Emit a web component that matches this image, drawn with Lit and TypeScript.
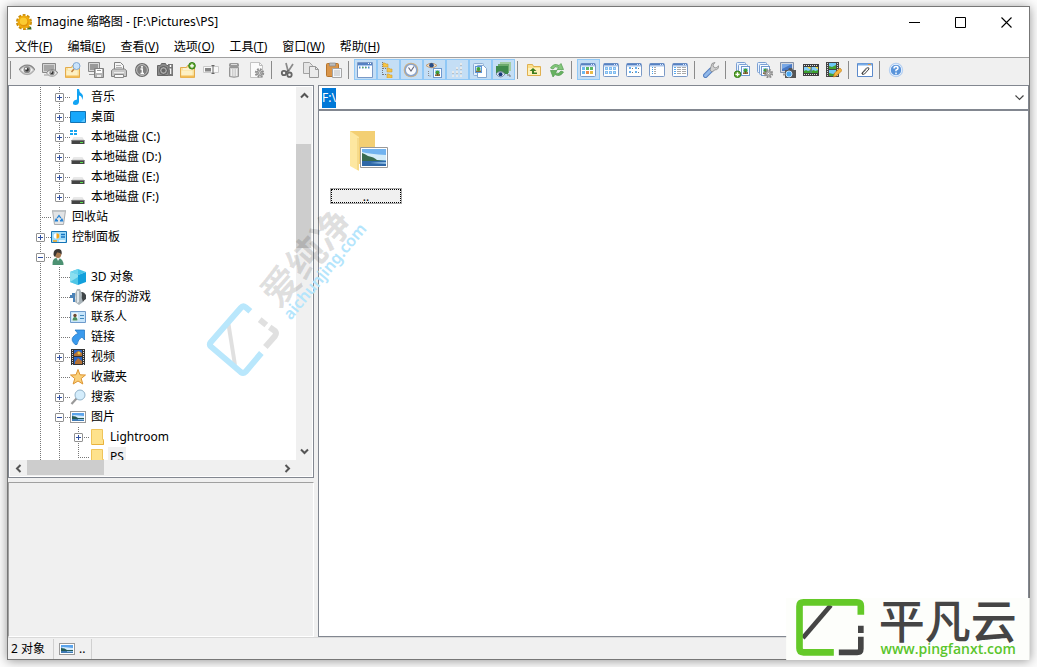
import { LitElement, html, svg, css, nothing } from "lit";
import { customElement, property, query } from "lit/decorators.js";
import { classMap } from "lit/directives/class-map.js";

/* ---------- icon artwork, all on a 16 x 16 grid ---------- */

const eye = svg`
  <path d="M0 8Q3 3.200 8 3T16 8Q13 13 8 13T0 8Z" fill="#c4c4c4"/>
  <path d="M0 8Q3 3.400 8 3.200T16 8" fill="none" stroke="#858585" stroke-width="1.200"/>
  <path d="M1 8.500Q4 12.500 8 12.700T15 8.500" fill="none" stroke="#a8a8a8"/>
  <path d="M2 8Q4 5 8 5T14 8Q11 11.500 8 11.500T2 8Z" fill="#f4f4f4"/>
  <circle cx="8" cy="7.800" r="3.500" fill="#8a8a8a"/><circle cx="8" cy="7.800" r="1.800" fill="#333"/>
  <circle cx="7" cy="6.700" r="1" fill="#fff"/>`;

const folder = svg`
  <path d="M.5 5.500h6l1-2h7v12H.5z" fill="#f9e09a" stroke="#e3ab4c"/>
  <path d="M1.500 8.500h11v6h-11z" fill="#fdf0c4"/><path d="M3 7h9" stroke="#fff"/>
  <path d="M1 14.500h13" stroke="#f3bd55" stroke-width="2"/>`;

const plusBadge = (x: number, y: number) => svg`
  <circle cx=${x} cy=${y} r="3.300" fill="#62a82f" stroke="#2f7d17"/>
  <path d=${`M${x - 2} ${y}h4M${x} ${y - 2}v4`} stroke="#fff" stroke-width="1.300"/>`;

const gear = (x: number, y: number) => svg`
  <circle cx=${x} cy=${y} r="3.700" fill="none" stroke="#8f8f8f" stroke-width="2" stroke-dasharray="1.800 1.100"/>
  <circle cx=${x} cy=${y} r="2.600" fill="#d2d2d2" stroke="#8a8a8a"/>
  <circle cx=${x} cy=${y} r="1.100" fill="#fff" stroke="#777" stroke-width=".7"/>`;

const pane = svg`
  <rect x=".5" y="1.500" width="15" height="13" rx="1" fill="#fff" stroke="#7a99c6"/>
  <path d="M1 2.500h14" stroke="#5681c2" stroke-width="2"/><path d="M1 4h14" stroke="#a9c6ec"/>
  <path d="M11 2.500h1M13 2.500h1" stroke="#dce9ff"/>`;

const dots = (color: string, xs: number[], ys: number[], w = 2, h = 2) =>
  xs.map((x) => ys.map((y) => svg`<rect x=${x} y=${y} width=${w} height=${h} fill=${color}/>`));

const photo = (x: number, y: number) => svg`
  <g transform=${`translate(${x} ${y})`}>
    <rect x=".5" y=".5" width="8" height="9" fill="#fff" stroke="#6f98ce"/>
    <path d="M2 2h5v6H2z" fill="#a9d3ff"/><path d="M2 8V6.500l5-.5v2z" fill="#8a6a3a"/>
    <circle cx="4.500" cy="4.500" r="2" fill="#3f9f35"/><path d="M4.500 5v3" stroke="#75521e"/></g>`;

const stack = svg`
  <rect x="2.500" y=".5" width="9" height="10" rx="1" fill="#eaf3ff" stroke="#7ba0d3"/>
  <rect x="4.500" y="2.500" width="9" height="10" rx="1" fill="#f6faff" stroke="#7ba0d3"/>`;

const film = svg`
  <path d="M0 2h16v12H0z" fill="#3d3d3d"/>
  <path d="M1 3.500h14M1 12.500h14" stroke="#e3e3e3" stroke-dasharray="1 1"/>
  <path d="M1 5h6.500v6H1zM8.500 5h6.500v6H8.500z" fill="#83cdf9"/>
  <path d="M1 11V9l2-1 2 1 2.500-1v3zM8.500 11V9l2-1 2 1 2.500-1v3z" fill="#3ea12f"/>
  <path d="M4 5h3.500v2.500zM12 5h3v2.500z" fill="#f3dc3c"/>`;

const drive = svg`
  <path d="M4 8h8l3 4H1z" fill="#d9d9d9"/><path d="M4 8h8l1 2H3z" fill="#e9e9e9"/>
  <path d="M1.500 11.500h13v3.500h-13z" fill="#444"/><path d="M1.500 11.500h13" stroke="#777"/>
  <path d="M10 13h3v1h-3z" fill="#59e04c"/>`;

const landscape = svg`
  <rect x=".5" y="2.500" width="15" height="11" fill="#fff" stroke="#999"/>
  <path d="M2 4h12v8H2z" fill="#5ba4ec"/><path d="M4 6l10 1v2.500H2V7z" fill="#d6ecfb"/>
  <path d="M2 7q4 0 6 2h6v1H2z" fill="#245a55"/><path d="M2 10h12v2H2z" fill="#3f7ab4"/>
  <path d="M8 10.500h6" stroke="#8cbce6"/>`;

const icons: Record<string, unknown> = {
  app: svg`
    <circle cx="8" cy="8" r="6.500" fill="none" stroke="#c98d0c" stroke-width="3" stroke-dasharray="2.700 1.384"/>
    <circle cx="8" cy="8" r="6.500" fill="#f0ac0c"/><circle cx="8" cy="8" r="4.500" fill="#e1930a"/>
    <circle cx="7.500" cy="7.200" r="3.800" fill="#fbcb31"/><path d="M10 15.500l5-3 .5 3z" fill="#3c6c20"/>`,
  eye,
  screenEye: svg`
    <path d="M.5 1.500h13v9H.5z" fill="#d3d3d3" stroke="#888"/><path d="M2 3h10v6H2z" fill="#a6a6a6"/>
    <path d="M2 13h6M4 11h3" stroke="#999"/><g transform="translate(4 5) scale(.75)">${eye}</g>`,
  folderFind: svg`${folder}
    <path d="M9 7L6.500 10" stroke="#c08040" stroke-width="1.500"/>
    <circle cx="11.500" cy="4" r="3.500" fill="#c9e3fb" stroke="#7fa7d3"/>`,
  screenSave: svg`
    <path d="M.5.500h11v9H.5z" fill="#d9d9d9" stroke="#8a8a8a"/><path d="M2 2h8v6H2z" fill="#999"/>
    <path d="M1 12.500h5" stroke="#999"/><path d="M6.500 6.500h9v9h-9z" fill="#b5b5b5" stroke="#808080"/>
    <path d="M8 7h6v4H8z" fill="#fff"/><path d="M9 8.500h4" stroke="#999"/><path d="M9 13h4v2H9z" fill="#eee"/>`,
  print: svg`
    <path d="M3.500.500h6l3 3v5h-9z" fill="#f5f5f5" stroke="#808080"/><path d="M5 3.500h5M5 5.500h6" stroke="#b0b0b0"/>
    <path d="M.5 8.500l2-1.500h11l2 1.500v6H.500z" fill="#c8c8c8" stroke="#808080"/>
    <path d="M3 10.500h10" stroke="#eee"/><path d="M3.500 12.500h9v3h-9z" fill="#f8f8f8" stroke="#888"/>`,
  info: svg`
    <circle cx="8" cy="8" r="7" fill="#6a6a6a"/><circle cx="8" cy="8" r="5.400" fill="#808080" stroke="#c4c4c4"/>
    <path d="M8 4v1.700" stroke="#fff" stroke-width="1.700"/><path d="M6.500 7H8.300v4.500M6.500 11.500h3.500" stroke="#fff" stroke-width="1.300" fill="none"/>`,
  camera: svg`
    <path d="M.5 3.500h3l1-2h4l1 2h3v10H.5z" fill="#8a8a8a" stroke="#666"/><circle cx="6.500" cy="8.500" r="4" fill="#a9a9a9" stroke="#555"/>
    <circle cx="6.500" cy="8.500" r="2" fill="#666"/><path d="M11 2h5v12h-5z" fill="#777"/>
    <path d="M13.500 3v2" stroke="#fff" stroke-width="1.500"/><path d="M12.500 7h1.200v5" stroke="#fff" stroke-width="1.200" fill="none"/>`,
  folderNew: svg`${folder}${plusBadge(12, 3.800)}`,
  rename: svg`
    <path d="M.5 4.500h15v6H.500z" fill="#f8f8f8" stroke="#cacaca"/><path d="M2 6h6v3.500H2z" fill="#858585"/>
    <path d="M8.500 3.500h3M8.500 11.500h3M10 3.500v8" stroke="#666"/>`,
  bin: svg`
    <path d="M3.500 5.500h9v9q-4.500 1.500-9 0z" fill="#cfcfcf" stroke="#959595"/>
    <path d="M5.500 7v7M8 7v7M10.500 7v7" stroke="#eee"/><rect x="3" y="1" width="10" height="4" rx="1.500" fill="#999"/>
    <path d="M5 2.500h6" stroke="#ddd"/>`,
  pageGear: svg`
    <path d="M1.500.500h9l3 3v12h-12z" fill="#fbfbfb" stroke="#c3c3c3"/><path d="M10.500.500v3h3" fill="none" stroke="#bbb"/>${gear(10.500, 11)}`,
  cut: svg`
    <path d="M8 9L6 1M8.500 9L13 2" stroke="#8a8a8a" stroke-width="1.700"/>
    <circle cx="4" cy="11" r="2.200" fill="none" stroke="#666" stroke-width="1.800"/>
    <circle cx="9.500" cy="12.700" r="2.200" fill="none" stroke="#666" stroke-width="1.800"/><path d="M6 10l3-1.500" stroke="#666" stroke-width="1.500"/>`,
  copy: svg`
    <path d="M.5.500h6l3 3v8h-9z" fill="#e5e5e5" stroke="#a2a2a2"/>
    <path d="M6.500 4.500h6l3 3v8h-9z" fill="#ececec" stroke="#989898"/><path d="M12.500 4.500v3h3" fill="none" stroke="#999"/>`,
  paste: svg`
    <rect x=".5" y="1.500" width="12" height="13" rx="1" fill="#d9954a" stroke="#b6742c"/>
    <path d="M3.500 1h6v3h-6z" fill="#bbb" stroke="#888" stroke-width=".7"/>
    <path d="M6.500 6.500h9v9h-9z" fill="#f4f7fb" stroke="#a5a5a5"/><path d="M8 9h6M8 11h6M8 13h6" stroke="#bdbdbd"/>`,
  windowBar: svg`
    <path d="M.5.500h15v15H.5z" fill="#fff" stroke="#7a99c6"/><path d="M1 2h14" stroke="#5681c2" stroke-width="2"/>
    <path d="M1 3.500h14" stroke="#a9c6ec"/><path d="M11 1.500h1M13 1.500h1" stroke="#fff"/>
    <path d="M2 5.500h12" stroke="#4f8fd0" stroke-width="2" stroke-dasharray="1.500 1.500"/><path d="M5 5.500h6" stroke="#61ad5b" stroke-width="1" stroke-dasharray="1.500 1.500"/>`,
  treeView: svg`
    <path d="M2.500 0v14M3 6.500h4M3 12.500h4" stroke="#777" stroke-dasharray="1 1" fill="none"/>
    ${[0, 5, 11].map((y) => svg`<path d=${`M${y ? 7 : 3} ${y + 1}h2l1 1h2v3h-5z`} fill="#f6c544" stroke="#d09a30" stroke-width=".6"/>`)}`,
  clock: svg`
    <circle cx="8" cy="8" r="7.300" fill="#d9b377"/><circle cx="8" cy="8" r="5.800" fill="#f9fbff" stroke="#8ba5cc" stroke-width="1.500"/>
    <path d="M5.500 5.500L8 9l3-4.500" fill="none" stroke="#667" stroke-width="1.100"/>`,
  eyePhoto: svg`
    <path d="M0 3.500Q5.500-1 11 3.500Q5.500 8 0 3.500Z" fill="#f3e2cb" stroke="#c29b71"/><circle cx="5.500" cy="3.300" r="2.300" fill="#284d88"/>
    <path d="M2.500 9v5h3" stroke="#888" stroke-dasharray="1 1" fill="none"/>${photo(7, 6)}`,
  grid: svg`${dots("#e6e9eb", [11], [1])}${dots("#e6e9eb", [7, 11], [5])}${dots("#e6e9eb", [3, 7, 11], [9, 13])}
    <path d="M3 11.500h2M7 11.500h2M11 11.500h2M7 7.500h2M11 7.500h2M11 3.500h2" stroke="#b9c2c8"/>`,
  photos: svg`
    <rect x="1.500" y="1.500" width="10" height="12" rx="1" fill="#e4f0fc" stroke="#8daed4"/>
    <path d="M5.500 3.500h6l3 3v9h-9z" fill="#fff" stroke="#86a7cf"/><path d="M3 4h7v7H3z" fill="#5b95d8"/>
    <path d="M4 5h5v5H4z" fill="#d9ecff"/><path d="M4 8.500h5v1.500H4z" fill="#8a6a3a"/><circle cx="6.500" cy="7" r="2" fill="#43a33a"/>`,
  greenEye: svg`
    <path d="M5 0h11v9H5z" fill="#a3cda4"/><path d="M3 2h11v9H3z" fill="#6cab6d"/><path d="M1 4h12v8H1z" fill="#3e8a4b"/>
    <path d="M1 12q4-5 9 0-4 6-9 0z" fill="#e9f2fb" stroke="#7b8ba5"/><circle cx="5.500" cy="12.200" r="2" fill="#183a7c"/>
    <path d="M12 13h3v2" stroke="#777" fill="none"/>`,
  folderUp: svg`
    <path d="M1.500 2.500h5l1 2h7v9h-13z" fill="#fbe08c" stroke="#e0b050"/><path d="M2 6h12v7H2z" fill="#fff1bb"/>
    <path d="M7 6l3.500 3H8v1.500h3V12H6V9H3.500z" fill="#3d7d20"/>`,
  refresh: svg`
    <path d="M1.500 6Q5 .5 10 3.500L12 1.500l2.500 6H8l1.700-2Q6 3.500 4 7z" fill="#82c77a" stroke="#4f9a4c" stroke-width=".7"/>
    <path d="M14.500 10Q11 15.500 6 12.500L4 15 1.500 8.500H8L6.300 11Q10 12.500 12 9z" fill="#66b260" stroke="#4f9a4c" stroke-width=".7"/>`,
  thumbs: svg`${pane}${dots("#6cb9f0", [2], [5, 9], 3, 3)}${dots("#5bb765", [6], [5], 3, 3)}${dots("#5bb765", [10], [5], 3, 3)}${dots("#e98a4d", [6], [9], 3, 3)}${dots("#e9bd49", [10], [9], 3, 3)}`,
  tiles: svg`${pane}${dots("#82bdf0", [2, 6, 10], [5, 9], 3, 3)}<path d="M3 6.500h1M7 6.500h1M11 6.500h1M3 10.500h1M7 10.500h1M11 10.500h1" stroke="#b9dcfa"/>`,
  small: svg`${pane}${dots("#66b0ee", [3, 9], [5, 9])}<path d="M6 6.500h1M12 6.500h1M6 10.500h1M12 10.500h1" stroke="#777"/>`,
  list: svg`${pane}<path d="M3 5.500h1M3 7.500h1M3 9.500h1M3 11.500h1" stroke="#3f9de9"/><path d="M5 5.500h2M5 7.500h2M5 9.500h2M5 11.500h2" stroke="#aaa"/>`,
  details: svg`${pane}<path d="M2 5.500h2M2 7.500h2M2 9.500h2M2 11.500h2" stroke="#58aaf0"/><path d="M5 5.500h9M5 7.500h9M5 9.500h9M5 11.500h9" stroke="#aaa" stroke-dasharray="4 1"/>`,
  wrench: svg`
    <path d="M2.500 13.500L8 8" stroke="#557fc0" stroke-width="5" stroke-linecap="round"/>
    <path d="M2.500 13.500L7.500 8.500" stroke="#92b9ea" stroke-width="3" stroke-linecap="round"/>
    <path d="M7 8l2 2 3-2.200q3.500.2 3.800-4L13 6l-2.500-1L10 3l2-2.500Q8 .5 8 4.500z" fill="#d0d0d0" stroke="#8a8a8a" stroke-width=".8"/>`,
  stackAdd: svg`${stack}${photo(7, 4)}${plusBadge(3.500, 12.300)}`,
  stackGear: svg`<g transform="translate(-2 0)">${stack}${photo(6, 4)}</g>${gear(11.500, 11.500)}`,
  screenCam: svg`
    <path d="M.5.500h13v10H.5z" fill="#d5d9e1" stroke="#8492a9"/><path d="M2 2h10v7H2z" fill="#4778c4"/><path d="M2 2h10L2 7z" fill="#79a8e6"/>
    <path d="M3 12.500h5" stroke="#999" stroke-width="2"/><path d="M5 8h3l1-2h3l1 2h3v8H5z" fill="#555"/><circle cx="9" cy="12" r="3" fill="#4ba8f1" stroke="#bfe2ff"/>`,
  film,
  filmEdit: svg`
    <path d="M0 0h13v15H0z" fill="#444"/><path d="M1.500 1v14M11.500 1v14" stroke="#ddd" stroke-dasharray="1 1"/>
    <path d="M3 1h7v6H3zM3 8h7v6H3z" fill="#6cc8f7"/><path d="M3 7V4l3 1 4-2v4zM3 14v-3l4 1 3-1v3z" fill="#43a133"/>
    <path d="M7.500 15l1-4 5.500-5 2 2.500-5.500 5.500z" fill="#f3b63e" stroke="#be7a1a" stroke-width=".7"/>`,
  clip: svg`
    <path d="M.5 1.500h15v13H.500z" fill="#fff" stroke="#5c8acb"/><path d="M1 2.500h14" stroke="#7baee8" stroke-width="2"/><path d="M11 2.500h3" stroke="#e89a3c"/>
    <path d="M4.500 11.500l5-5.500q3-1 2.500 1l-4.500 5q-3 1.500-2-1L9 7.500" fill="none" stroke="#444"/>`,
  help: svg`
    <circle cx="8" cy="8" r="7.200" fill="#b4cff1"/><circle cx="8" cy="8" r="5.700" fill="#5a94da" stroke="#e8f2ff"/>
    <path d="M6 6.500q0-2 2-2t2 1.700q0 1-2 2v1M8 10.500v1.700" fill="none" stroke="#fff" stroke-width="1.500"/>`,

  music: svg`<path d="M7 0h2q0 3 3 5 2 2 0 6 .5-4-3-4.500V13q-.5 3-3.500 3T3 13.500 7 10.500z" fill="#12a4f4"/>`,
  desktop: svg`<path d="M.5 2.500h15v11H.5z" fill="#18a8fb" stroke="#1474b4"/><path d="M15 9v4h-4z" fill="#58c6ff"/>`,
  driveWin: svg`${drive}<path d="M0 1h3v2H0zM4 1h3v2H4zM0 4h3v2H0zM4 4h3v2H4z" fill="#18a6f0"/>`,
  drive,
  recycle: svg`
    <path d="M1.500 1.500h13l-2 14h-9z" fill="#e2e4e6" stroke="#aaadb0"/><path d="M2 1h12v2H2z" fill="#bfc3c6"/>
    <path d="M8 5.500l-2.500 3.500h1.500l1-1.500 1 1.500h1.500z" fill="#2482d4"/><path d="M4.500 9.500l-1 3h3.500v-1.500H6l.5-1.500zM11.500 9.500l1 3H9v-1.500h1l-.5-1.500z" fill="#2482d4"/>`,
  control: svg`
    <path d="M.5 2.500h15v11H.5z" fill="#9edbf8" stroke="#1473b5"/><circle cx="5.500" cy="7" r="2.800" fill="#fff"/>
    <path d="M5.500 7V4.200A2.800 2.800 0 0 1 5.500 9.800z" fill="#f1a51b"/><path d="M10 5.500h4M10 8h4" stroke="#1674c1" stroke-width="1.500"/>
    <path d="M2 12h4" stroke="#f1a51b" stroke-width="1.500"/><path d="M8 12h6" stroke="#fff" stroke-width="1.500"/>`,
  user: svg`
    <path d="M1.500 16q-.5-6 3.500-7h3q4.500 1.500 4.500 7z" fill="#4c9172"/><ellipse cx="7" cy="5" rx="3.300" ry="4" fill="#a9794f"/>
    <path d="M2.500 5q0-5 5-5 4 0 3 5.500Q9 3 6 3.500L4 8Q2.500 7 2.500 5z" fill="#3b3733"/><path d="M5.500 9l1.500 3L9 9z" fill="#eee"/>`,
  cube: svg`<path d="M8 0l8 3-8 3-8-3z" fill="#45c4e8"/><path d="M0 3l8 3v10l-8-3z" fill="#8adff0"/><path d="M16 3L8 6v10l8-3z" fill="#12a0dc"/><path d="M0 13L8 8v8z" fill="#4fc6e6"/><path d="M8 0v6L0 3z" fill="#6fd5ee"/>`,
  game: svg`
    <path d="M0 6h2V4h3v9H3V9H0z" fill="#4b83b8"/><path d="M10 4q3-3 6 2v4q-2 1-3 3h-3z" fill="#404548"/>
    <path d="M5 13q1-5 0-8l2-5h3l2 5q-1 4 1 8l-4 3z" fill="#a9b4ba"/><path d="M7 2h2v11l-2 1z" fill="#e1e8eb"/>`,
  contact: svg`
    <path d="M.5 2.500h15v11H.5z" fill="#c7e5fb" stroke="#6f9bcb"/><path d="M2 4h6v8H2z" fill="#edf6fb"/>
    <circle cx="5" cy="6.500" r="1.700" fill="#6e4a34"/><path d="M2.500 11.500q0-3.500 2.500-3.500t2.500 3.500z" fill="#4b8f60"/><path d="M10 6.500h4M10 9.500h4" stroke="#438abd"/>`,
  link: svg`<path d="M5 1h9.500v10L12 8q-4 2-5 7.500H5Q.5 11 3 8t5-3.500z" fill="#3a9aed" stroke="#1a70bd" stroke-width=".7"/>`,
  video: svg`
    <path d="M1 0h14v16H1z" fill="#333"/><path d="M2.500 1v15M13.500 1v15" stroke="#ddd" stroke-dasharray="1 1"/>
    <path d="M4 1h8v6H4zM4 8h8v7H4z" fill="#2864c4"/><path d="M4 5l4-3 4 2v3H4zM5 13l3-4 4 3v3H5z" fill="#b67334"/><circle cx="9" cy="4" r="1.500" fill="#ecc544"/>`,
  star: svg`<path d="M8 .5l2 5.300 5.500.2-4.300 3.500L12.800 15 8 12l-4.800 3 1.600-5.500L.5 6l5.500-.2z" fill="#fad07a" stroke="#dd9430"/>`,
  search: svg`<path d="M1.500 15l5-5.500" stroke="#999" stroke-width="2.200"/><circle cx="10" cy="6" r="5" fill="#d4edfc" stroke="#93b3c9"/>`,
  landscape,
  folderPlain: svg`<path d="M2.500.500h11v10h1V15.500h-12z" fill="#fee28c" stroke="#efc45b"/><path d="M3 15.500h11.500v-4" fill="none" stroke="#e9b23c"/>`,
};

const icon = (name: string) =>
  html`<svg class="icon" viewBox="0 0 16 16" width="16" height="16" aria-hidden="true">${icons[name]}</svg>`;

/* ---------- toolbar ---------- */

interface Tool { icon: string; label: string; pressed?: boolean }
const t = (name: string, label: string, pressed = false): Tool => ({ icon: name, label, pressed });

const toolGroups: Tool[][] = [
  [t("eye", "查看"), t("screenEye", "全屏查看"), t("folderFind", "浏览"), t("screenSave", "另存为"), t("print", "打印"),
   t("info", "信息"), t("camera", "相机信息"), t("folderNew", "新建文件夹"), t("rename", "重命名"), t("bin", "删除"), t("pageGear", "属性")],
  [t("cut", "剪切"), t("copy", "复制"), t("paste", "粘贴")],
  [t("windowBar", "地址栏", true), t("treeView", "文件夹树", true), t("clock", "历史", true), t("eyePhoto", "预览", true),
   t("grid", "网格", true), t("photos", "图像", true), t("greenEye", "自动预览", true)],
  [t("folderUp", "向上"), t("refresh", "刷新")],
  [t("thumbs", "缩略图", true), t("tiles", "平铺"), t("small", "小图标"), t("list", "列表"), t("details", "详细信息")],
  [t("wrench", "选项")],
  [t("stackAdd", "添加"), t("stackGear", "批量转换"), t("screenCam", "截屏"), t("film", "动画"), t("filmEdit", "编辑动画")],
  [t("clip", "附件")],
  [t("help", "帮助")],
];

@customElement("tool-bar")
class ToolBar extends LitElement {
  static styles = css`
    :host { display: flex; padding: 1px 0 5px; background: #f0f0f0; border-top: 1px solid #a0a0a0; }
    .group { display: flex; }
    .group::before { content: ""; width: 1px; height: 18px; margin: 2px 5px 0 2px; background: #8b8b8b; }
    button { width: 23px; height: 21px; padding: 2px; border: 1px solid transparent; background: none; display: flex; }
    button.pressed { background: #c4def5; border-color: #90c8f6; }
    .icon { display: block; flex: none; }
  `;
  render() {
    return toolGroups.map((g) => html`<div class="group" role="group">${g.map((b) => html`
      <button class=${classMap({ pressed: !!b.pressed })} title=${b.label} aria-label=${b.label}
        aria-pressed=${b.pressed ? "true" : "false"}>${icon(b.icon)}</button>`)}</div>`);
  }
}

/* ---------- folder tree ---------- */

/* guides: one letter a column. v: line, t: tee, l: corner */
interface Row { guides: string; icon: string; label: string; toggle?: "+" | "-"; selected?: boolean }

const rows: Row[] = [
  { guides: "vt", icon: "music", label: "音乐", toggle: "+" },
  { guides: "vt", icon: "desktop", label: "桌面", toggle: "+" },
  { guides: "vt", icon: "driveWin", label: "本地磁盘 (C:)", toggle: "+" },
  { guides: "vt", icon: "drive", label: "本地磁盘 (D:)", toggle: "+" },
  { guides: "vt", icon: "drive", label: "本地磁盘 (E:)", toggle: "+" },
  { guides: "vl", icon: "drive", label: "本地磁盘 (F:)", toggle: "+" },
  { guides: "t", icon: "recycle", label: "回收站" },
  { guides: "t", icon: "control", label: "控制面板", toggle: "+" },
  { guides: "t", icon: "user", label: "", toggle: "-" },
  { guides: "vt", icon: "cube", label: "3D 对象" },
  { guides: "vt", icon: "game", label: "保存的游戏" },
  { guides: "vt", icon: "contact", label: "联系人" },
  { guides: "vt", icon: "link", label: "链接" },
  { guides: "vt", icon: "video", label: "视频", toggle: "+" },
  { guides: "vt", icon: "star", label: "收藏夹" },
  { guides: "vt", icon: "search", label: "搜索", toggle: "+" },
  { guides: "vt", icon: "landscape", label: "图片", toggle: "-" },
  { guides: "vvt", icon: "folderPlain", label: "Lightroom", toggle: "+" },
  { guides: "vvl", icon: "folderPlain", label: "PS", selected: true },
];

const arrow = (d: string) => html`<svg viewBox="0 0 9 9" width="9" height="9" aria-hidden="true">
  <path d=${d} fill="none" stroke="#555" stroke-width="2"/></svg>`;

@customElement("folder-tree")
class FolderTree extends LitElement {
  static styles = css`
    :host { display: grid; grid-template: minmax(0, 1fr) 16px / minmax(0, 1fr) 16px;
      border: 1px solid #828790; padding: 1px; background: #fff; min-height: 0; }
    .rows { margin: 0; padding: 0 0 0 22px; list-style: none; overflow: hidden; }
    .row { display: flex; align-items: center; height: 20px; }
    .guide { width: 19px; height: 20px; flex: none; display: flex; align-items: center; background-repeat: no-repeat; }
    .v, .t, .l { --down: repeating-linear-gradient(#777 0 1px, transparent 1px 2px);
      --across: repeating-linear-gradient(90deg, #777 0 1px, transparent 1px 2px); }
    .v { background-image: var(--down); background-size: 1px 20px; background-position: 8px 0; }
    .t { background-image: var(--down), var(--across); background-size: 1px 20px, 11px 1px; background-position: 8px 0, 8px 10px; }
    .l { background-image: var(--down), var(--across); background-size: 1px 10px, 11px 1px; background-position: 8px 0, 8px 10px; }
    .toggle { width: 9px; height: 9px; margin: 1px 0 0 4px; padding: 0; border: 1px solid #919191; border-radius: 1px; background: #fff; display: grid; }
    .label { margin-left: 3px; padding: 0 2px; line-height: 20px; white-space: pre; }
    .selected { background: #f0f0f0; }
    .bar { display: flex; align-items: center; background: #f0f0f0; }
    .down { flex-direction: column; }
    .bar button { border: 0; padding: 0; background: none; width: 17px; height: 17px; display: grid; place-items: center; }
    .thumb { background: #cdcdcd; }
    .across .thumb { width: 27%; height: 15px; align-self: flex-start; }
    .down .thumb { width: 15px; height: 28%; align-self: flex-start; margin-top: 40px; }
    .space { flex: 1; }
    .corner { background: #f0f0f0; }
  `;
  render() {
    return html`
      <ul class="rows" role="tree">${rows.map((r) => html`
        <li class="row" role="treeitem" aria-level=${r.guides.length} aria-selected=${r.selected ? "true" : "false"}>
          ${[...r.guides].map((g, i) => html`<span class="guide ${g}">${r.toggle && i === r.guides.length - 1
            ? html`<button class="toggle" aria-label=${r.toggle === "+" ? "展开" : "折叠"}>
                <svg viewBox="0 0 7 7" width="7" height="7"><path d=${r.toggle === "+" ? "M1 3.500h5M3.500 1v5" : "M1 3.500h5"} stroke="#2f4fa0"/></svg></button>`
            : nothing}</span>`)}
          ${icon(r.icon)}${r.label ? html`<span class=${classMap({ label: true, selected: !!r.selected })}>${r.label}</span>` : nothing}
        </li>`)}</ul>
      <div class="bar down"><button aria-label="向上滚动">${arrow("M1 6.500L4.500 3 8 6.500")}</button><div class="thumb"></div>
        <div class="space"></div><button aria-label="向下滚动">${arrow("M1 2.500L4.500 6 8 2.500")}</button></div>
      <div class="bar across"><button aria-label="向左滚动">${arrow("M6.500 1L3 4.500 6.500 8")}</button><div class="thumb"></div>
        <div class="space"></div><button aria-label="向右滚动">${arrow("M2.500 1L6 4.500 2.500 8")}</button></div>
      <div class="corner"></div>`;
  }
}

/* ---------- translucent and opaque brand marks ---------- */

@customElement("brand-mark")
class BrandMark extends LitElement {
  @property() kind = "center";
  static styles = css`
    :host { display: block; pointer-events: none; }
    svg { display: block; overflow: visible; }
    .cjk { font-family: "Noto Sans CJK SC", sans-serif; }
    .center { font-weight: 700; font-size: 114px; fill: #000; fill-opacity: .12; }
    .site { font-family: "Noto Sans", sans-serif; font-size: 48px; font-weight: 600; fill: #b4e5fc; }
    .name { font-weight: 500; font-size: 138px; fill: #454545; }
    .url { font-family: "Open Sans", sans-serif; font-weight: 600; font-size: 42px; fill: #5ac52b; }
  `;
  render() {
    return this.kind === "center"
      ? html`<svg viewBox="0 0 570 600" width="190" height="200" role="img" aria-label="爱纯净">
          <path d="M100 400L120 525" stroke="#000" stroke-opacity=".12" stroke-width="12"/>
          <path d="M166 364L152 352Q144 346 137 354L47 457Q42 464 48 470L137 546Q145 552 152 545L199 489" fill="none" stroke="#b9e7fc" stroke-width="18"/>
          <path d="M194 389L214 405M224 412L240 423Q246 430 240 438L211 471" fill="none" stroke="#000" stroke-opacity=".12" stroke-width="18"/>
          <text class="cjk center" transform="translate(250 358) rotate(-48)">爱纯净</text>
          <text class="site" transform="translate(287 392) rotate(-50)">aichunjing.com</text></svg>`
      : html`<svg viewBox="48 54 731 186" width="244" height="62" role="img" aria-label="平凡云">
          <path d="M48 54h731v186H48z" fill="#fdfefb"/>
          <path d="M98 174L182 76" stroke="#454545" stroke-width="14"/>
          <path d="M272 104V78Q272 67 260 67H100Q88 67 88 79V205Q88 217 100 217H191" fill="none" stroke="#64c928" stroke-width="20"/>
          <path d="M272 137v22M272 170v36q0 11-11 11h-55" fill="none" stroke="#454545" stroke-width="17"/>
          <text class="cjk name" x="326" y="174">平凡云</text>
          <text class="url" x="331" y="223">www.pingfanxt.com</text></svg>`;
  }
}

/* ---------- window ---------- */

const menus: [string, string][] = [["文件", "F"], ["编辑", "E"], ["查看", "V"], ["选项", "O"], ["工具", "T"], ["窗口", "W"], ["帮助", "H"]];

@customElement("app-root")
class AppRoot extends LitElement {
  @query(".path") path!: HTMLInputElement;
  static styles = css`
    :host { display: flex; position: relative; box-sizing: border-box; height: 100vh; padding: 6px 7px 7px; background: #fcfcfc;
      font: 12px/20px "Noto Sans", "Noto Sans CJK SC", sans-serif; color: #000; }
    .window { flex: 1; min-width: 0; display: grid; grid-template-rows: 30px 20px auto minmax(0, 1fr) 22px;
      border: 1px solid #777; background: #fff; box-shadow: 0 1px 10px #0006; }
    button { font: inherit; color: inherit; border: 0; background: none; }
    .title { display: flex; align-items: center; padding-left: 8px; gap: 5px; }
    .caption { flex: 1; margin: 0; font: inherit; }
    .system { display: flex; align-self: stretch; }
    .system button { width: 46px; padding: 0; display: grid; place-items: center; }
    .menu { display: flex; gap: 1px; }
    .menu button { padding: 0 7px; height: 20px; }
    .body { display: grid; grid-template-columns: 306px minmax(0, 1fr); column-gap: 4px; background: #f0f0f0; min-height: 0; }
    .side { display: grid; grid-template-rows: minmax(0, 1fr) 155px; row-gap: 4px; min-height: 0; }
    .preview { border: 1px solid; border-color: #a0a0a0 #fff #fff #a0a0a0; }
    .main { display: flex; flex-direction: column; min-width: 0; }
    .address { display: flex; align-items: center; height: 25px; box-sizing: border-box; border: 1px solid #828790; background: #fff; }
    .path { flex: 1; min-width: 0; border: 0; outline: 0; padding: 0 3px; font: inherit; height: 20px; color: #000; background: none; }
    .path::selection { background: #0078d7; color: #fff; }
    .drop { width: 17px; height: 20px; padding: 0; display: grid; place-items: center; }
    .files { flex: 1; border: 1px solid #828790; background: #fff; padding: 19px 12px; }
    .file { width: 70px; padding: 0; display: grid; justify-items: center; row-gap: 15px; }
    .name { box-sizing: border-box; width: 100%; height: 14px; line-height: 14px; border: 1px dotted #000; outline: 1px solid #aaa; background: #f0f0f0; }
    .status { display: flex; align-items: center; background: #f0f0f0; border-top: 1px solid #d9d9d9; box-sizing: border-box; }
    .cell { display: flex; align-items: center; gap: 4px; padding: 0 6px 0 5px; border-right: 1px solid #d0d0d0; }
    .cell:first-child { padding: 0 8px 0 3px; }
    .center-mark { position: absolute; left: 195px; top: 190px; }
    .corner-mark { position: absolute; right: 7px; bottom: 7px; }
  `;
  firstUpdated() {
    this.path.focus();
    this.path.select();
  }
  render() {
    return html`
      <div class="window">
        <header class="title"><svg viewBox="0 0 16 16" width="16" height="16" aria-hidden="true">${icons.app}</svg>
          <h1 class="caption">Imagine 缩略图 - [F:\\Pictures\\PS]</h1>
          <div class="system">
            <button aria-label="最小化"><svg viewBox="0 0 11 11" width="11" height="11"><path d="M0 5.500h11" stroke="#000"/></svg></button>
            <button aria-label="最大化"><svg viewBox="0 0 11 11" width="11" height="11"><path d="M.5.500h10v10H.5z" fill="none" stroke="#000"/></svg></button>
            <button aria-label="关闭"><svg viewBox="0 0 11 11" width="11" height="11"><path d="M.5.500l10 10M10.500.500l-10 10" stroke="#000" stroke-width="1.100"/></svg></button>
          </div></header>
        <nav class="menu">${menus.map(([m, k]) => html`<button>${m}(<u>${k}</u>)</button>`)}</nav>
        <tool-bar role="toolbar"></tool-bar>
        <div class="body">
          <aside class="side"><folder-tree></folder-tree><div class="preview"></div></aside>
          <main class="main">
            <div class="address"><input class="path" aria-label="地址" value="F:\\" spellcheck="false">
              <button class="drop" aria-label="展开地址列表"><svg viewBox="0 0 9 6" width="9" height="6"><path d="M.5.500l4 4 4-4" fill="none" stroke="#444" stroke-width="1.200"/></svg></button></div>
            <div class="files"><button class="file" aria-label="上级文件夹">
              <svg viewBox="0 0 44 44" width="44" height="44" aria-hidden="true">
                <path d="M6 1h25v33H6z" fill="#f3cf73"/><path d="M6 1l9 6v34l-9-5z" fill="#fde7a0"/><path d="M14 8v32" stroke="#efce75"/>
                <path d="M16.500 17.500h27v20h-27z" fill="#fff" stroke="#999"/><path d="M18 19h24v17H18z" fill="#71b3ef"/>
                <path d="M18 22q7 2 24 3v5H18z" fill="#d3ecf9"/><path d="M18 23q3 1 6 3 6 1 9 4l9 1v1H18z" fill="#386a4f"/>
                <path d="M18 31h24v5H18z" fill="#2f68a8"/><path d="M26 33q8-1 16-1v2z" fill="#8dbbe2"/></svg>
              <span class="name">..</span></button></div>
          </main>
        </div>
        <footer class="status"><span class="cell">2 对象</span><span class="cell">${icon("landscape")}..</span></footer>
      </div>
      <brand-mark class="center-mark" kind="center"></brand-mark>
      <brand-mark class="corner-mark" kind="corner"></brand-mark>`;
  }
}
